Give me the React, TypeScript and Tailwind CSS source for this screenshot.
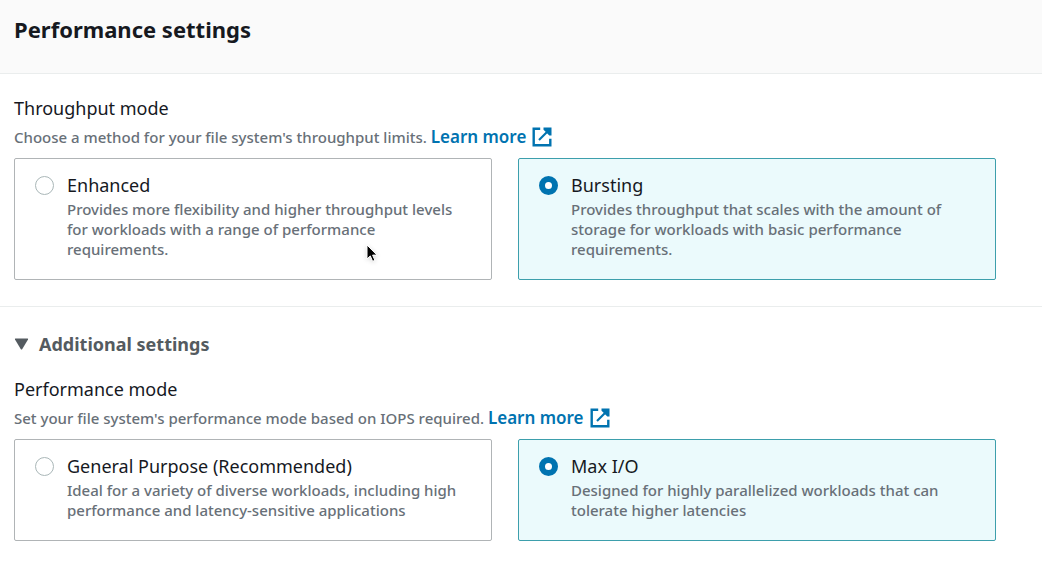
import { useState } from 'react';

type Option = { value: string; title: string; description: string };

function ExternalIcon() {
  return (
    <svg
      className="ml-[6px] inline-block h-5 w-5 align-[-4px]"
      viewBox="0 0 20 20"
      fill="none"
      stroke="currentColor"
      strokeWidth="2.4"
      aria-hidden="true"
    >
      <path d="M8.2 1.7H1.7v16.6h16.6v-6.5" />
      <path d="M17.5 2.5 7 13" strokeWidth="2.2" />
      <path d="M11.500 0.500h8v8h-2.200l-1.500-1.600-2.700-2.700-1.600-1.500z" fill="currentColor" stroke="none" />
    </svg>
  );
}

function OptionGroup({
  name,
  label,
  hint,
  options,
  initial,
}: {
  name: string;
  label: string;
  hint: string;
  options: Option[];
  initial: string;
}) {
  const [selected, setSelected] = useState(initial);
  return (
    <div role="radiogroup" aria-labelledby={`${name}-label`}>
      <h3 id={`${name}-label`} className="text-[18px] leading-6 text-[#16191f]">
        {label}
      </h3>
      <p className="mt-1 mb-2 text-[15px] leading-[26px] font-medium text-[#687078]">
        {hint}{' '}
        <a href="#learn-more" className="text-[17px] font-semibold text-[#0073b0]">
          Learn more
          <ExternalIcon />
        </a>
      </p>
      <div className="grid grid-cols-2 gap-[26px]">
        {options.map((o) => (
          <label
            key={o.value}
            className="flex items-start gap-[13px] rounded-[2px] border border-[#b0b4b6] bg-white px-5 pt-[14px] pb-5 has-checked:border-[#3d9fac] has-checked:bg-[#ebfafc]"
          >
            <input
              type="radio"
              name={name}
              value={o.value}
              checked={selected === o.value}
              onChange={() => setSelected(o.value)}
              className="mt-[3px] h-[19px] w-[19px] shrink-0 appearance-none rounded-full border border-[#aab7b8] bg-white checked:border-6 checked:border-[#0073b0]"
            />
            <span className="min-w-0">
              <span className="block text-[18px] leading-6 text-[#16191f]">{o.title}</span>
              <span className="mt-0.5 block text-[15px] leading-5 font-medium text-[#687078]">
                {o.description}
              </span>
            </span>
          </label>
        ))}
      </div>
    </div>
  );
}

const throughput: Option[] = [
  {
    value: 'enhanced',
    title: 'Enhanced',
    description:
      'Provides more flexibility and higher throughput levels for workloads with a range of performance requirements.',
  },
  {
    value: 'bursting',
    title: 'Bursting',
    description:
      'Provides throughput that scales with the amount of storage for workloads with basic performance requirements.',
  },
];

const performance: Option[] = [
  {
    value: 'general',
    title: 'General Purpose (Recommended)',
    description:
      'Ideal for a variety of diverse workloads, including high performance and latency-sensitive applications',
  },
  {
    value: 'max-io',
    title: 'Max I/O',
    description: 'Designed for highly parallelized workloads that can tolerate higher latencies',
  },
];

export default function App() {
  const [open, setOpen] = useState(true);
  return (
    <main className="relative min-h-screen bg-white font-['Noto_Sans',sans-serif]">
      <header className="border-b border-[#eaeded] bg-[#fafafa] px-[14px] pt-[13px] pb-7">
        <h2 className="text-[22px] leading-8 font-bold text-[#16191f]">Performance settings</h2>
      </header>
      <section className="border-b border-[#eaeded] pt-[22px] pr-[46px] pb-[26px] pl-[14px]">
        <OptionGroup
          name="throughput"
          label="Throughput mode"
          hint="Choose a method for your file system's throughput limits."
          options={throughput}
          initial="bursting"
        />
      </section>
      <section className="pt-[25px] pr-[46px] pb-5 pl-[14px]">
        <button
          type="button"
          aria-expanded={open}
          onClick={() => setOpen(!open)}
          className="mb-[21px] flex items-center gap-[10px] text-[18px] leading-6 font-bold text-[#545b60]"
        >
          <svg className="h-3 w-[15px]" viewBox="0 0 15 12" fill="currentColor" aria-hidden="true">
            <path d="M1.500 0.500h12q1 0 .5 1L8.300 11q-.8 1-1.600 0L1 1.500q-.5-1 .5-1z" />
          </svg>
          Additional settings
        </button>
        {open && (
          <OptionGroup
            name="performance"
            label="Performance mode"
            hint="Set your file system's performance mode based on IOPS required."
            options={performance}
            initial="max-io"
          />
        )}
      </section>
      <svg
        className="pointer-events-none absolute top-[244px] left-[366px] h-[19px] w-3 drop-shadow-sm"
        viewBox="0 0 12 19"
        aria-hidden="true"
      >
        <path
          d="M1 1v14l3.300-3.100 2.300 5.400 2.300-1-2.300-5.200H11z"
          fill="#000"
          stroke="#fff"
          strokeWidth="1"
        />
      </svg>
    </main>
  );
}
